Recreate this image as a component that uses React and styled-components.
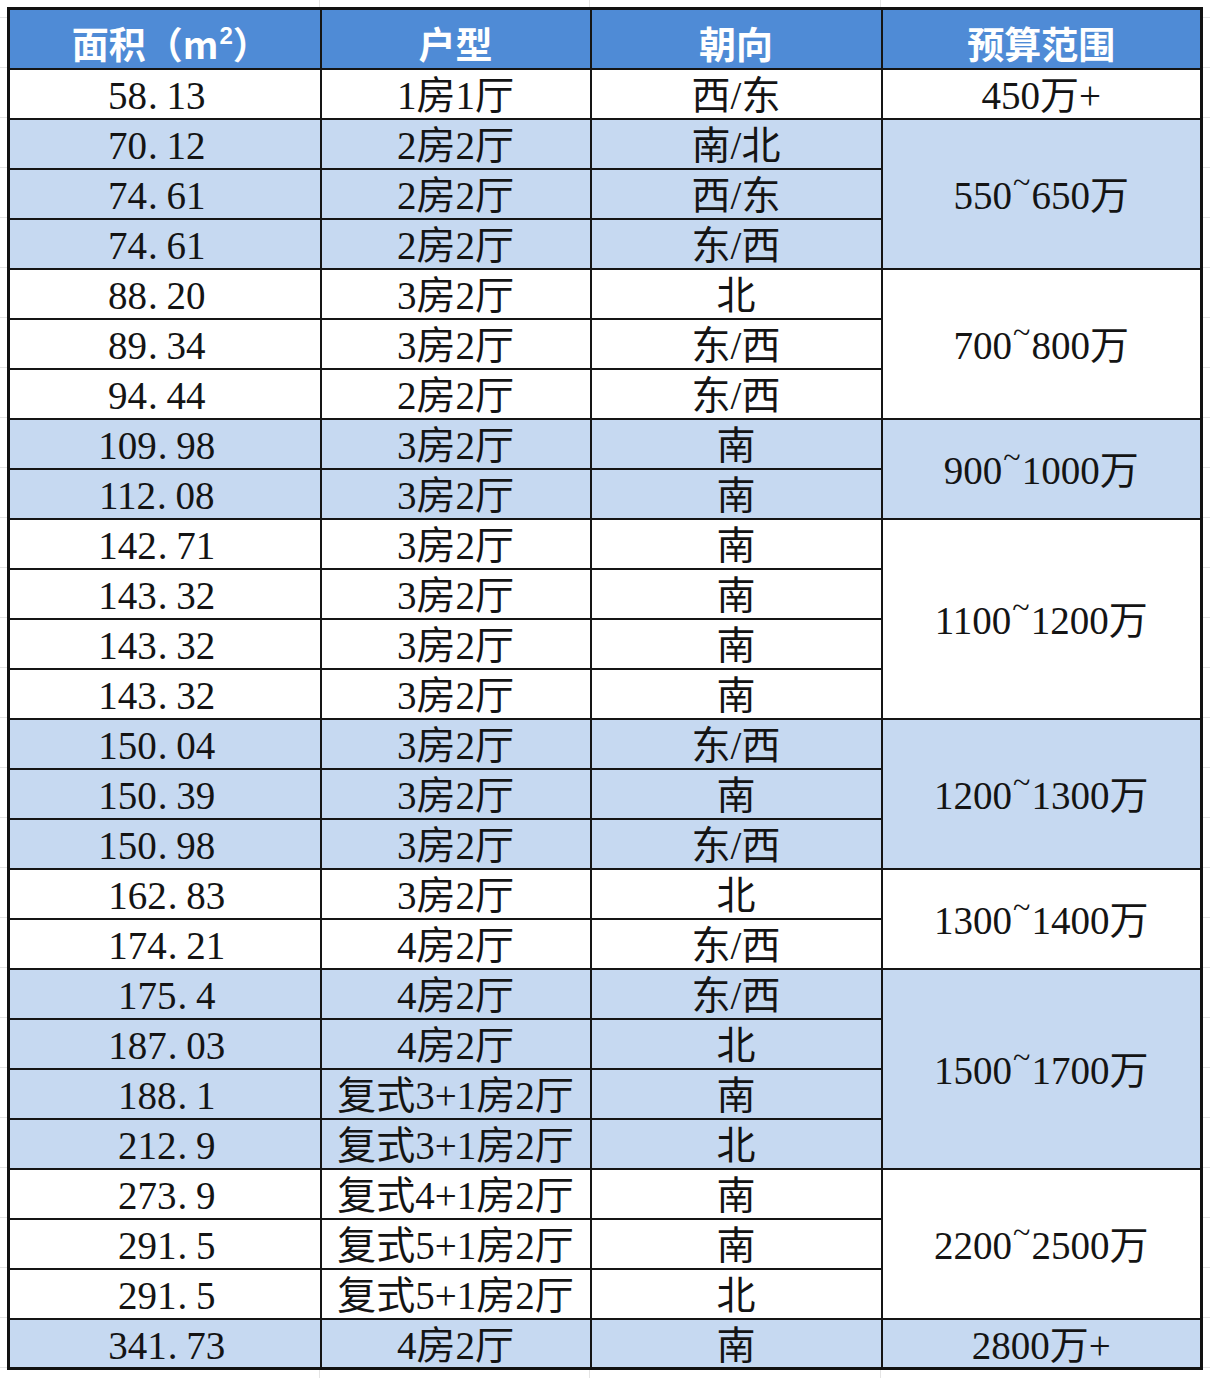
import React from 'react';
import styled, { createGlobalStyle } from "styled-components";

const rows = [
  ['58.13', '1房1厅', '西/东'],
  ['70.12', '2房2厅', '南/北'],
  ['74.61', '2房2厅', '西/东'],
  ['74.61', '2房2厅', '东/西'],
  ['88.20', '3房2厅', '北'],
  ['89.34', '3房2厅', '东/西'],
  ['94.44', '2房2厅', '东/西'],
  ['109.98', '3房2厅', '南'],
  ['112.08', '3房2厅', '南'],
  ['142.71', '3房2厅', '南'],
  ['143.32', '3房2厅', '南'],
  ['143.32', '3房2厅', '南'],
  ['143.32', '3房2厅', '南'],
  ['150.04', '3房2厅', '东/西'],
  ['150.39', '3房2厅', '南'],
  ['150.98', '3房2厅', '东/西'],
  ['162.83', '3房2厅', '北', true],
  ['174.21', '4房2厅', '东/西', true],
  ['175.4', '4房2厅', '东/西', true],
  ['187.03', '4房2厅', '北', true],
  ['188.1', '复式3+1房2厅', '南', true],
  ['212.9', '复式3+1房2厅', '北', true],
  ['273.9', '复式4+1房2厅', '南', true],
  ['291.5', '复式5+1房2厅', '南', true],
  ['291.5', '复式5+1房2厅', '北', true],
  ['341.73', '4房2厅', '南', true],
]

// budget column is merged over groups of rows, shading alternates per group
const groups = [
  { span: 1, from: '450万+' },
  { span: 3, from: '550', to: '650万' },
  { span: 3, from: '700', to: '800万' },
  { span: 2, from: '900', to: '1000万' },
  { span: 4, from: '1100', to: '1200万' },
  { span: 3, from: '1200', to: '1300万' },
  { span: 2, from: '1300', to: '1400万' },
  { span: 4, from: '1500', to: '1700万' },
  { span: 3, from: '2200', to: '2500万' },
  { span: 1, from: '2800万+' },
]

const GlobalStyle = createGlobalStyle`
  html, body {
    margin: 0;
    padding: 0;
    background: #fff;
  }
`

const Sheet = styled.div`
  width: 1210px;
  min-height: 1378px;
  box-sizing: border-box;
  padding: 7px 0 0 7px;
  background-color: #fff;
  background-image:
    linear-gradient(to right, transparent 319px, #e4e4e4 319px 320px, transparent 320px 589px, #e4e4e4 589px 590px, transparent 590px 880px, #e4e4e4 880px 881px, transparent 881px),
    repeating-linear-gradient(to bottom, transparent 0 17px, #e4e4e4 17px 18px, transparent 18px 50px);
`

const Table = styled.table`
  border-collapse: collapse;
  table-layout: fixed;
  width: 1196px;
  border: 3px solid #111;
  font-family: "Liberation Serif", "Noto Sans CJK SC", serif;
`

const HeadCell = styled.th`
  width: ${p => p.w}px;
  height: 60px;
  box-sizing: border-box;
  padding: 8px 0 0 ${p => p.shift || 0}px;
  background: #4f8bd6;
  color: #fff;
  border: 2px solid #151515;
  font-family: "Noto Sans CJK SC", "Noto Sans", sans-serif;
  font-weight: 700;
  font-size: 37px;
  line-height: 48px;
  text-align: center;
  vertical-align: middle;
  white-space: nowrap;

  sup {
    font-size: 24px;
    line-height: 0;
    vertical-align: 15px;
    margin-left: 1px;
    font-family: "Liberation Sans", sans-serif;
  }
`

const Cell = styled.td`
  height: 50px;
  box-sizing: border-box;
  padding: 5px 0 0;
  background: ${p => (p.shaded ? '#c6d9f1' : '#fff')};
  color: #141414;
  border: 2px solid #151515;
  font-size: 39px;
  line-height: 42px;
  text-align: center;
  vertical-align: middle;
  white-space: nowrap;
`

// first column sits a little left of centre; later rows carry a leading half-space
const AreaCell = styled(Cell)`
  padding: 5px ${p => (p.indent ? '0 0 4px' : '16px 0 0')};
`

const Dot = styled.span`
  display: inline-block;
  width: 19.5px;
  text-align: left;
  padding-left: 1px;
  box-sizing: border-box;
`

const Tilde = styled.span`
  display: inline-block;
  vertical-align: 0.5em;
  font-size: 32px;
  line-height: 0;
  margin: 0 1px;
`

const Num = ({ value }) => {
  const [a, b] = value.split('.')
  return b === undefined ? value : <>{a}<Dot>.</Dot>{b}</>
}

export default function App() {
  let start = 0
  const budgetAt = {}
  const shadeOf = []
  groups.forEach((g, i) => {
    budgetAt[start] = { ...g, shaded: i % 2 === 1 }
    for (let k = 0; k < g.span; k++) shadeOf[start + k] = i % 2 === 1
    start += g.span
  })

  return (
    <>
      <GlobalStyle />
      <Sheet>
        <Table>
          <thead>
            <tr>
              <HeadCell w={312} shift={12}>面积（m<sup>2</sup>）</HeadCell>
              <HeadCell w={270}>户型</HeadCell>
              <HeadCell w={291}>朝向</HeadCell>
              <HeadCell w={320}>预算范围</HeadCell>
            </tr>
          </thead>
          <tbody>
            {rows.map((r, i) => {
              const b = budgetAt[i]
              return (
                <tr key={i}>
                  <AreaCell indent={r[3]} shaded={shadeOf[i]}><Num value={r[0]} /></AreaCell>
                  <Cell shaded={shadeOf[i]}>{r[1]}</Cell>
                  <Cell shaded={shadeOf[i]}>{r[2]}</Cell>
                  {b && (
                    <Cell rowSpan={b.span} shaded={b.shaded}>
                      {b.to ? <>{b.from}<Tilde>~</Tilde>{b.to}</> : b.from}
                    </Cell>
                  )}
                </tr>
              )
            })}
          </tbody>
        </Table>
      </Sheet>
    </>
  )
}
